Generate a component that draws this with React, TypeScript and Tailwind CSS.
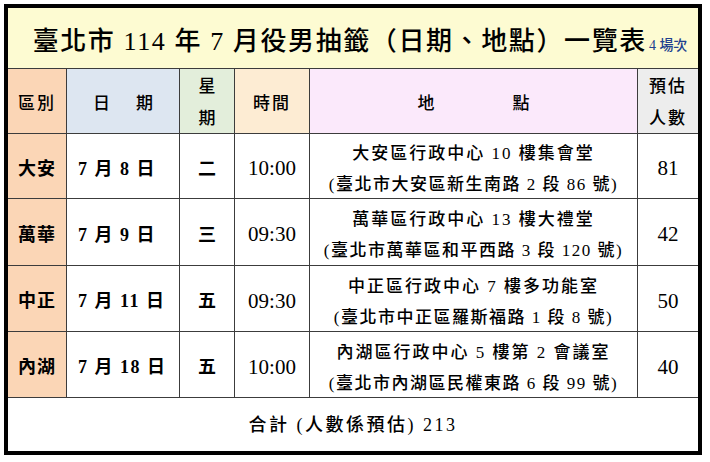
const rows = [
    {
        district: "大安",
        date: "7 月 8 日",
        weekday: "二",
        time: "10:00",
        place: "大安區行政中心 10 樓集會堂",
        address: "(臺北市大安區新生南路 2 段 86 號)",
        count: "81"
    },
    {
        district: "萬華",
        date: "7 月 9 日",
        weekday: "三",
        time: "09:30",
        place: "萬華區行政中心 13 樓大禮堂",
        address: "(臺北市萬華區和平西路 3 段 120 號)",
        count: "42"
    },
    {
        district: "中正",
        date: "7 月 11 日",
        weekday: "五",
        time: "09:30",
        place: "中正區行政中心 7 樓多功能室",
        address: "(臺北市中正區羅斯福路 1 段 8 號)",
        count: "50"
    },
    {
        district: "內湖",
        date: "7 月 18 日",
        weekday: "五",
        time: "10:00",
        place: "內湖區行政中心 5 樓第 2 會議室",
        address: "(臺北市內湖區民權東路 6 段 99 號)",
        count: "40"
    }
];

const cell = "flex items-center justify-center bg-white";

export default function App() {
    return (
        <div className="w-[710px] h-[462px] bg-white pt-[4px] pl-[4px] font-['Liberation_Serif','Noto_Sans_CJK_TC',serif] text-black">
            <div className="w-[698px] h-[451px] border-4 border-black bg-[#3c3c3c] grid grid-cols-[58px_112px_54px_74px_327px_60px] grid-rows-[60px_64px_64px_66px_65px_65px_53px] gap-px">
                {/* title */}
                <div className="col-span-6 flex items-center justify-center bg-[#fdfbd2] pt-[6px] pl-[14px]">
                    <div className="flex items-baseline">
                        <span className="text-[26px] font-medium tracking-[1.6px]">
                            臺北市 114 年 7 月役男抽籤（日期、地點）一覽表
                        </span>
                        <span className="ml-[2px] text-[14px] font-medium text-[#213f8f]">4 場次</span>
                    </div>
                </div>

                {/* header */}
                <div className="flex items-center justify-center bg-[#fbd6b6] pt-[6px] text-[17px] font-medium tracking-[2px]">區別</div>
                <div className="flex items-center justify-center gap-[26px] bg-[#dde6f1] pt-[6px] text-[17px] font-medium">
                    <span>日</span>
                    <span>期</span>
                </div>
                <div className="flex flex-col items-center justify-center gap-[12px] bg-[#e3eedb] pt-[4px] text-[17px] font-medium leading-[20px]">
                    <span>星</span>
                    <span>期</span>
                </div>
                <div className="flex items-center justify-center bg-[#fdecd3] pt-[6px] text-[17px] font-medium tracking-[2px]">時間</div>
                <div className="flex items-center justify-center gap-[78px] bg-[#fbe9fb] pt-[6px] text-[17px] font-medium">
                    <span>地</span>
                    <span>點</span>
                </div>
                <div className="flex flex-col items-center justify-center gap-[12px] bg-[#ededed] pt-[4px] text-[17px] font-medium leading-[20px] tracking-[2px]">
                    <span>預估</span>
                    <span>人數</span>
                </div>

                {rows.map(row => (
                    <div key={row.district} className="contents">
                        <div className="flex items-center justify-center bg-[#fbd6b6] pt-[6px] text-[18px] font-bold tracking-[1px]">
                            {row.district}
                        </div>
                        <div className="flex items-center bg-white pl-[11px] pt-[6px] text-[18px] font-semibold tracking-[1.5px] whitespace-pre">
                            {row.date}
                        </div>
                        <div className={`${cell} pt-[6px] text-[18px] font-semibold`}>{row.weekday}</div>
                        <div className={`${cell} pt-[6px] text-[21px]`}>{row.time}</div>
                        <div className={`${cell} flex-col pt-[6px] font-medium leading-[31px]`}>
                            <span className="text-[17px] tracking-[2px]">{row.place}</span>
                            <span className="text-[17px] tracking-[1.5px]">{row.address}</span>
                        </div>
                        <div className={`${cell} pt-[6px] text-[21px]`}>{row.count}</div>
                    </div>
                ))}

                {/* total */}
                <div className="col-span-6 flex items-center justify-center bg-white pt-[2px] text-[18px] font-medium tracking-[2.5px]">
                    合計 (人數係預估) 213
                </div>
            </div>
        </div>
    );
}
